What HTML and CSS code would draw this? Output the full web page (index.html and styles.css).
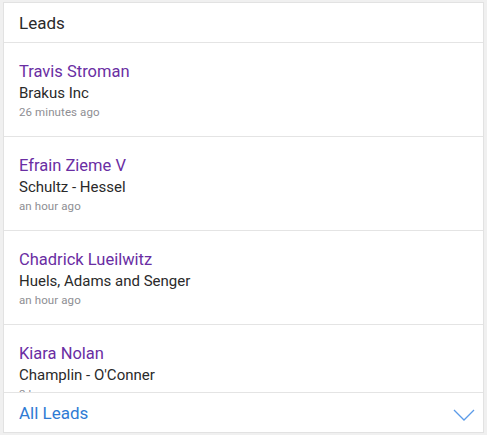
FILE: index.html
```html
<!DOCTYPE html>
<html>
<head>
<meta charset="utf-8">
<link rel="stylesheet" href="styles.css">
</head>
<body>
<div class="card">
  <div class="header">Leads</div>
  <div class="list">
    <div class="row">
      <div class="name">Travis Stroman</div>
      <div class="company">Brakus Inc</div>
      <div class="time">26 minutes ago</div>
    </div>
    <div class="row">
      <div class="name">Efrain Zieme V</div>
      <div class="company">Schultz - Hessel</div>
      <div class="time">an hour ago</div>
    </div>
    <div class="row">
      <div class="name">Chadrick Lueilwitz</div>
      <div class="company">Huels, Adams and Senger</div>
      <div class="time">an hour ago</div>
    </div>
    <div class="row">
      <div class="name">Kiara Nolan</div>
      <div class="company">Champlin - O'Conner</div>
      <div class="time">2 hours ago</div>
    </div>
  </div>
  <div class="footer">
    <span class="all">All Leads</span>
    <svg class="chev" width="22" height="12" viewBox="0 0 22 12"><path d="M1 1 L11 11 L21 1" fill="none" stroke="#5b9be8" stroke-width="1.3"/></svg>
  </div>
</div>
</body>
</html>
```

FILE: styles.css
```css
html, body {
  margin: 0;
  padding: 0;
  background: #f0f0f0;
}
body {
  font-family: "Roboto", "Liberation Sans", sans-serif;
  padding: 2px 3px 2px 3px;
}
.card {
  width: 479px;
  height: 429px;
  background: #fff;
  border: 1px solid #e2e2e2;
  display: flex;
  flex-direction: column;
}
.header {
  height: 39px;
  flex: none;
  border-bottom: 1px solid #e4e4e4;
  font-size: 17px;
  color: #2a2a2a;
  padding-left: 15px;
  display: flex;
  align-items: center;
}
.list {
  flex: 1;
  overflow: hidden;
}
.row {
  border-bottom: 1px solid #e4e4e4;
  padding: 18px 16px 0 15px;
  box-sizing: border-box;
  height: 94px;
}
.name {
  font-size: 16.5px;
  line-height: 22px;
  color: #6a2ea3;
}
.company {
  font-size: 15px;
  line-height: 20px;
  color: #2a2a2a;
}
.time {
  font-size: 11.5px;
  line-height: 18px;
  color: #8e8e93;
  letter-spacing: 0.1px;
}
.footer {
  height: 40px;
  flex: none;
  border-top: 1px solid #e4e4e4;
  display: flex;
  align-items: center;
  justify-content: space-between;
  padding: 1px 8px 0 15px;
  box-sizing: border-box;
}
.all {
  font-size: 17px;
  color: #2f7bd4;
}
.chev {
  margin-top: 4px;
}
```
